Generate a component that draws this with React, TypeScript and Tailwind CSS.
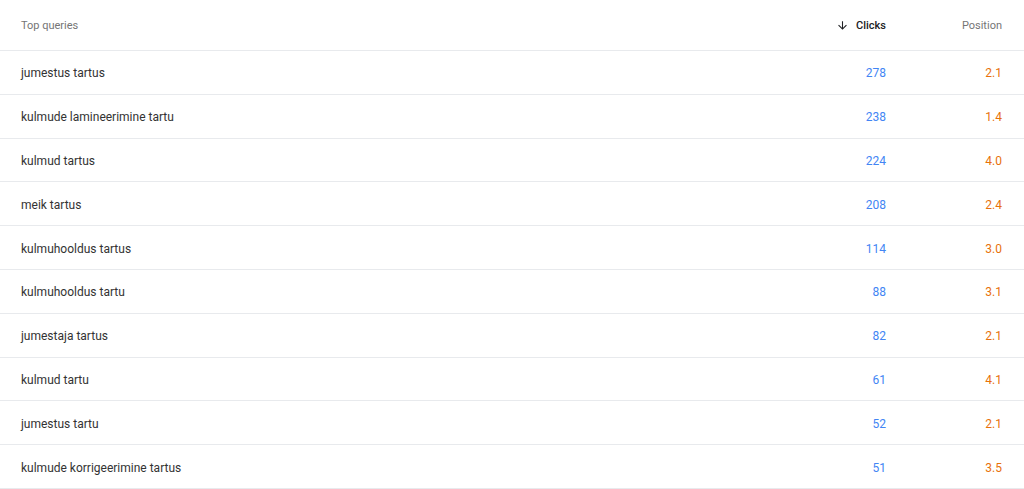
import React from "react";

const rows: [string, number, string][] = [
  ["jumestus tartus", 278, "2.1"],
  ["kulmude lamineerimine tartu", 238, "1.4"],
  ["kulmud tartus", 224, "4.0"],
  ["meik tartus", 208, "2.4"],
  ["kulmuhooldus tartus", 114, "3.0"],
  ["kulmuhooldus tartu", 88, "3.1"],
  ["jumestaja tartus", 82, "2.1"],
  ["kulmud tartu", 61, "4.1"],
  ["jumestus tartu", 52, "2.1"],
  ["kulmude korrigeerimine tartus", 51, "3.5"],
];

export default function App() {
  return (
    <div className="w-[1024px] h-[489px] bg-white overflow-hidden" style={{ fontFamily: "Roboto, 'Liberation Sans', sans-serif" }}>
      <div className="flex items-center h-[51px] border-b border-[#e8eaed] pl-[21px] pr-[22px] text-[11px] pt-[2px]">
        <div className="flex-1 text-[#757575]">Top queries</div>
        <div className="flex items-center gap-[7px] text-[#202124] font-medium">
          <svg width="13" height="13" viewBox="0 0 24 24" fill="#202124" className="mt-[-1px]">
            <path d="M20 12l-1.41-1.41L13 16.17V4h-2v12.17l-5.58-5.59L4 12l8 8 8-8z" />
          </svg>
          <span>Clicks</span>
        </div>
        <div className="w-[116px] text-right text-[#757575]">Position</div>
      </div>
      {rows.map(([q, c, p]) => (
        <div key={q} className="flex items-center h-[43.8px] border-b border-[#e8eaed] pl-[21px] pr-[22px] text-[12px] pt-[2px]">
          <div className="flex-1 text-[#333333]">{q}</div>
          <div className="text-[#4285f4]">{c}</div>
          <div className="w-[116px] text-right text-[#e8710a]">{p}</div>
        </div>
      ))}
    </div>
  );
}
